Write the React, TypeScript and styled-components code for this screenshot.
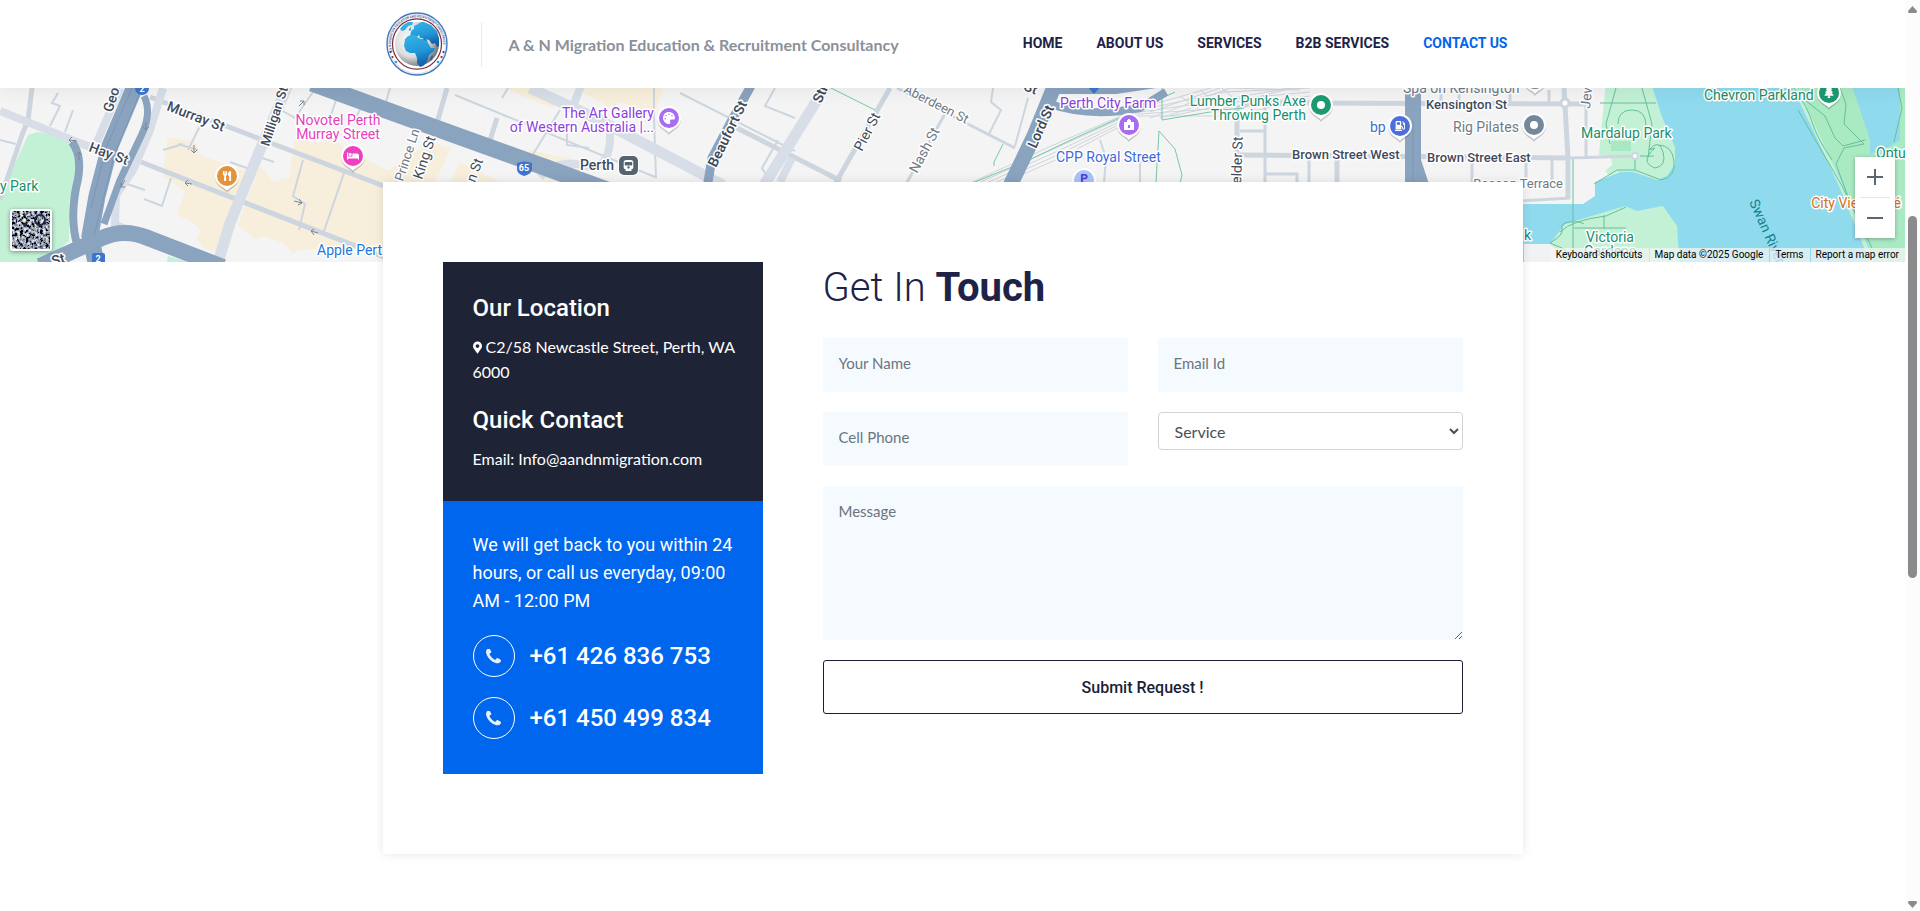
import React from "react";
import styled, { createGlobalStyle } from "styled-components";
import { FaBed, FaUtensils, FaMapMarkerAlt, FaPalette, FaGasPump, FaTree, FaTrain } from "react-icons/fa";

const heading = 'Roboto, "Liberation Sans", sans-serif';
const body = 'Lato, "Open Sans", sans-serif';
const navy = "#1e2247";
const blue = "#0066ee";

const GlobalStyle = createGlobalStyle`
  * { box-sizing: border-box; }
  body { margin: 0; background: #fff; font-family: ${body}; font-size: 15px; line-height: 25px; }
  h2, h3, p { margin: 0; }
  a { color: inherit; text-decoration: none; }
`;

const Viewport = styled.div`
  display: flex;
  height: 100vh;
  overflow: hidden;
`;

const Page = styled.div`
  flex: 1;
  min-width: 0;
  overflow: hidden;
`;

const Container = styled.div`
  width: 100%;
  max-width: 1140px;
  margin: 0 auto;
`;

const Header = styled.header`
  position: relative;
  z-index: 2;
  background: #fff;
  box-shadow: 0 0 20px rgba(0, 0, 0, 0.08);
`;

const HeaderRow = styled(Container)`
  display: flex;
  align-items: center;
  height: 88px;
  padding: 0 15px 0 3px;
`;

const LogoLink = styled.a`
  display: flex;
`;

const Tagline = styled.p`
  display: flex;
  align-items: center;
  height: 45px;
  margin-left: 33px;
  padding-left: 27px;
  border-left: 1px solid #e9eaec;
  color: #8b9099;
  font-size: 16px;
  font-weight: 700;
`;

const Nav = styled.nav`
  display: flex;
  gap: 34px;
  margin-left: auto;
  padding-bottom: 2px;
`;

const NavLink = styled.a<{ $active?: boolean }>`
  color: ${(p) => (p.$active ? blue : navy)};
  font: 700 14px/24px ${heading};
  text-transform: uppercase;
`;

const MapSection = styled.section`
  position: relative;
  height: 174px;
  background: #f4f4f4;
`;

const MapDrawing = styled.svg`
  display: block;
  width: 100%;
  height: 100%;
`;

const MapText = styled.text<{ $weight?: number; $size?: number; $plain?: boolean }>`
  font-family: ${heading};
  font-size: ${(p) => p.$size ?? 14}px;
  font-weight: ${(p) => p.$weight ?? 400};
  paint-order: stroke;
  stroke: ${(p) => (p.$plain ? "none" : "#fff")};
  stroke-width: 3px;
  stroke-linejoin: round;
`;

const SatelliteButton = styled.button`
  position: absolute;
  left: 10px;
  bottom: 11px;
  width: 42px;
  height: 42px;
  padding: 0;
  overflow: hidden;
  border: 2px solid #fff;
  border-radius: 3px;
  background: #889;
  box-shadow: 0 1px 4px rgba(0, 0, 0, 0.4);
`;

const ZoomControl = styled.div`
  position: absolute;
  right: 10px;
  bottom: 24px;
  width: 40px;
  padding: 0 5px;
  background: #fff;
  box-shadow: 0 1px 4px rgba(0, 0, 0, 0.3);
`;

const ZoomButton = styled.button`
  display: flex;
  align-items: center;
  justify-content: center;
  width: 100%;
  height: 40px;
  padding: 0;
  border: 0;
  background: none;
  & + & {
    height: 41px;
    border-top: 1px solid #e6e6e6;
  }
`;

const Attribution = styled.div`
  position: absolute;
  right: 0;
  bottom: 0;
  display: flex;
  height: 14px;
  font: 400 10px/14px ${heading};
  color: #000;
`;

const AttributionLink = styled.a`
  padding: 0 6px 0 5px;
  background: rgba(245, 245, 245, 0.72);
  & + & {
    margin-left: 1px;
  }
`;

const Card = styled(Container)`
  position: relative;
  z-index: 1;
  display: flex;
  gap: 60px;
  margin-top: -80px;
  padding: 80px 60px;
  background: #fff;
  box-shadow: 0 0 10px rgba(0, 0, 0, 0.1);
`;

const Aside = styled.aside`
  flex: 0 0 320px;
  color: #fff;
`;

const LocationPanel = styled.div`
  display: flex;
  flex-direction: column;
  gap: 20px;
  padding: 30px 20px 30px 30px;
  background: #1f2336;
`;

const PanelBlock = styled.div`
  display: flex;
  flex-direction: column;
  gap: 10px;
`;

const PanelTitle = styled.h3`
  font: 500 24px/32px ${heading};
`;

const PanelText = styled.p`
  font-size: 16px;
  svg {
    width: 9px;
    height: 13px;
    vertical-align: -1px;
  }
`;

const CallPanel = styled.div`
  display: flex;
  flex-direction: column;
  gap: 20px;
  padding: 30px 20px 35px 30px;
  background: ${blue};
`;

const CallText = styled.p`
  font: 400 18px/28px ${heading};
`;

const PhoneLink = styled.a`
  display: flex;
  align-items: center;
  gap: 15px;
  font: 500 24px/42px ${heading};
`;

const PhoneBadge = styled.span`
  display: flex;
  align-items: center;
  justify-content: center;
  width: 42px;
  height: 42px;
  border: 1px solid #fff;
  border-radius: 50%;
`;

const FormColumn = styled.div`
  flex: 1;
  min-width: 0;
`;

const FormTitle = styled.h2`
  margin-bottom: 24px;
  color: ${navy};
  font: 300 40px/52px ${heading};
  strong {
    font-weight: 700;
  }
`;

const Form = styled.form`
  display: grid;
  grid-template-columns: 1fr 1fr;
  gap: 20px 30px;
  align-items: start;
`;

const Input = styled.input`
  width: 100%;
  height: 54px;
  padding: 0 16px 4px;
  border: 0;
  border-radius: 0;
  background: #f5faff;
  color: #495057;
  font: 400 15px/24px ${body};
  &::placeholder {
    color: #6c757d;
    opacity: 1;
  }
`;

const Textarea = styled(Input)`
  display: block;
  grid-column: 1 / -1;
  height: 154px;
  padding: 13px 16px;
  resize: vertical;
`;

const Select = styled.select`
  width: 100%;
  height: 38px;
  padding: 6px 12px;
  border: 1px solid #ced4da;
  border-radius: 4px;
  background: #fff;
  color: #495057;
  font: 400 16px/24px ${body};
`;

const Submit = styled.button`
  grid-column: 1 / -1;
  height: 54px;
  padding: 2px 6px 0;
  border: 1px solid #1b1f36;
  border-radius: 3px;
  background: #fff;
  color: #1b1f36;
  font: 500 16px/24px ${heading};
`;

const ScrollRail = styled.div`
  display: flex;
  flex: 0 0 15px;
  flex-direction: column;
  align-items: center;
  padding: 6px 0 3px;
  background: #fcfcfc;
`;

const RailArrow = styled.svg`
  flex: none;
  width: 9px;
  height: 7px;
  fill: #8b8b8d;
`;

const RailSpace = styled.div<{ $grow: number }>`
  flex: ${(p) => p.$grow} 0 0;
`;

const RailThumb = styled(RailSpace)`
  width: 9px;
  border-radius: 5px;
  background: #8b8b8d;
`;

function Logo() {
  return (
    <svg width="62" height="64" viewBox="0 0 62 64" role="img" aria-label="A & N Migration">
      <defs>
        <radialGradient id="sphere" cx="0.38" cy="0.4" r="0.65">
          <stop offset="0" stopColor="#fff" />
          <stop offset="0.6" stopColor="#dcdde0" />
          <stop offset="1" stopColor="#6f7176" />
        </radialGradient>
        <linearGradient id="land" x1="0" y1="0" x2="0.3" y2="1">
          <stop offset="0" stopColor="#37b6e8" />
          <stop offset="0.6" stopColor="#2398d8" />
          <stop offset="1" stopColor="#1361ac" />
        </linearGradient>
        <path id="ring" d="M6.5 40 A26 26 0 1 1 55.500 40" />
      </defs>
      <ellipse cx="31" cy="32" rx="30" ry="31" fill="#fff" stroke="#4577bd" strokeWidth="1.400" />
      <ellipse cx="31" cy="32" rx="28.500" ry="29.500" fill="none" stroke="#b9cbe4" strokeWidth="0.600" />
      <ellipse cx="31" cy="32" rx="24.500" ry="25.200" fill="#fff" stroke="#7d2b3c" strokeWidth="1.200" />
      <circle cx="31" cy="32" r="22" fill="url(#sphere)" />
      <text fontFamily="Roboto, sans-serif" fontSize="3" fontWeight="700" fill="#3c5b92">
        <textPath href="#ring">A &amp; N MIGRATION EDUCATION AND RECRUITMENT CONSULTANCY</textPath>
      </text>
      <g fill="url(#land)">
        <path d="M19 27l3-3 4-1 4-1 1 3 4 2 5-1 2 5 3 5 4 0-1 3-5 4-1 4-2 4-3 3-3 1-3-4 0-5-2-5-5 0-4-2-2-5z" />
        <path d="M25 20l1-2 2-1 0-3 4-2 3-2 3 0 7 3 6 6 2 7 0 8-2 1-2-4-3 1-3-4-3-1 1 2-3-1-1-2-3 0-1-3-2 2-2-2-3 0-2 1z" />
        <path d="M14 17l3-4 5-3 5 0-1 3-4 1-3 4-3 1zM23 17l2-2 0 3-2 1zM44 47l2-4 1 1-2 5z" />
      </g>
      <g fill="#3e2f5c">
        <circle cx="4.500" cy="40" r="1.100" />
        <circle cx="6.500" cy="45" r="1.100" fill="#8f2632" />
        <circle cx="10" cy="50" r="1.300" fill="#2aa7e0" />
        <circle cx="57.500" cy="40" r="1.100" />
        <circle cx="55.500" cy="45" r="1.100" fill="#8f2632" />
        <circle cx="52" cy="50" r="1.300" fill="#2aa7e0" />
      </g>
    </svg>
  );
}

type LabelProps = {
  x: number;
  y: number;
  color: string;
  children: string;
  rotate?: number;
  weight?: number;
  size?: number;
  plain?: boolean;
  anchor?: "start" | "middle" | "end";
};

function Label({ x, y, color, children, rotate = 0, weight, size, plain, anchor = "start" }: LabelProps) {
  return (
    <MapText
      x={x}
      y={y}
      fill={color}
      textAnchor={anchor}
      transform={rotate ? `rotate(${rotate} ${x} ${y})` : undefined}
      $weight={weight}
      $size={size}
      $plain={plain}
    >
      {children}
    </MapText>
  );
}

function Pin({ x, y, color, children }: { x: number; y: number; color: string; children?: React.ReactNode }) {
  return (
    <g transform={`translate(${x} ${y})`}>
      <path d="M0 16c-2-4-12-6-12-16a12 12 0 0 1 24 0c0 10-10 12-12 16z" fill="#0003" transform="translate(0 1)" />
      <path d="M0 15c-2-4-12-5-12-15a12 12 0 0 1 24 0c0 10-10 11-12 15z" fill="#fff" />
      <circle r="10" fill={color} />
      {children ?? <circle r="4" fill="#fff" />}
    </g>
  );
}

const road = "#cdd6df";
const wide = "#d8dee7";
const freeway = "#8aa3bf";
const dark = "#3f4b5c";
const grey = "#6f7b89";
const purple = "#8d41dc";
const green = "#17906b";

function PerthMap() {
  return (
    <MapDrawing viewBox="0 88 1905 174" preserveAspectRatio="xMidYMid slice" role="img" aria-label="Map of Perth">
      <rect y="80" width="1905" height="190" fill="#f4f4f4" />

      {/* city blocks */}
      <g fill="#f7eedb">
        <path d="M168 137l27 5 5 13 46 16 4 9-23 73-13-2-10-3-7-9 4-7-8-10-16-7 8-23-22-16z" />
        <path d="M295 140l25 3 13-4 16 12 40 20v92l-33-17-56 4-7 3-10-10-20-7-7 4-18-15 22-60 13 17 16-4z" />
        <path d="M505 88h32l23 16-8 4zM583 88h80l-8 26-35-12-8 6-29-15z" />
        <path d="M431 142l20 6-16 34h-52v-8z" />
        <path d="M528 150l60 12-10 10 30 10h-60zM460 162l40 20h-50z" />
      </g>

      {/* parks */}
      <path d="M28 135l9-3 30 5 10 20v15l-8 31v38l-24 21H0v-65z" fill="#c3f1d5" />
      <path d="M168 256l20 6h-21z" fill="#c3f1d5" />

      {/* river and shores */}
      <path d="M1645 80h260v190h-385v-66h63l12-8v-14l30-12 30-5z" fill="#90daee" />
      <path d="M1606 80h44l12 37 13 30v17l-8 12-10 4-24-8h-16l-7 4-5-5 7-6-1-8-12-2z" fill="#c3f1d5" />
      <path d="M1611 141h20v10h-20z" fill="#a9e8c3" />
      <path d="M1524 244h26l15-20 60-18 12 5 26-5 14 20 3 44h-156z" fill="#c3f1d5" />
      <path d="M1524 244h26l12 10-4 14h-34z" fill="#f0f2f3" />
      <path d="M1794 80h56l20 60v14l14-4 16-10v-60h10v190h-32l-34-86-28-52z" fill="#a9eac3" />
      <path d="M1794 86l24 50 24 52 30 74" stroke="#c3f1d5" strokeWidth="4" fill="none" />

      {/* park paths */}
      <g fill="none" stroke="#68bf9c" strokeWidth="1">
        <path d="M1616 88l-10 36 4 20M1642 88l10 36-4 34M1600 103h56M1618 124q0-14 14-14t14 16M1640 156h14M1655 148q-16 14 0 20 12-2 8-16t-14-2zM1635 156v14M1658 145q14 0 16 16t-13 19l-26-10h-18l-23 14" />
        <path d="M1573 158v100M1560 232q12-12 46-16l20-9M1574 228h52M1604 215v14M1550 243q14-8 12-14t8-7 14 2M1550 243l14 6 8 12" />
        <path d="M1794 88q14 20 18 34t20 38M1805 100l20 16 10 22 8 8 22-6M1840 88l6 16-2 20 20 20-20 4-8 16 16 44M1898 88l4 20-8 34M1798 110l44 76 30 62" />
      </g>

      {/* minor streets */}
      <g fill="none" stroke={road} strokeWidth="2">
        <path d="M58 93l-6 10 8 3-10 20M73 110l-8 22M0 140l16 4M163 150l20-6M202 122l-14 28M178 144l20 6M171 178l-9 28-18-7M127 184l18 6M230 162l22 8M262 158l12 4M303 160l-10 36 12 8-6 26M336 100l-6 18M366 100l-12 20M345 170l-22 64M390 88l-4 14M281 110l14 8 18-26M508 88l-6 10" />
        <path d="M455 95l200 82M560 110l-28 46M567 125v20l22 3M654 88v30l2 60M680 93l115 58M770 182l-8-14 16-28M775 88l-10 18 30 12M993 88l-2 14 10 8-12 24M1028 98l-13 48M1100 140l6 18-2 24M1140 182v-20h14" />
        <path d="M1240 131h26M1265 104v78M1265 174h32v8M1309 160v22M1472 163v19M1526 158v24M1552 158v22M1441 88v16M1459 88v16M1510 88v16M1549 90v14" strokeWidth="3" />
      </g>
      <g fill="none" stroke={road} strokeWidth="5">
        <path d="M32 88l-4 32-6 15-22 65M141 162l248 97M150 97l239 91M447 88l-10 35M497 118l-10 32M735 127l106 54M890 88l-55 96M1237 108v78M1237 108l15-5 340 1M1240 155l330 3M1564 88l4 70v40M1337 158v26" />
        <path d="M947 110l-42 76M897 88l118 60M1586 88v70M1568 158l70-2M1520 201l50-3" strokeWidth="3" />
      </g>
      <circle cx="1565" cy="103" r="4" fill="#fff" stroke={road} strokeWidth="3" />
      <circle cx="1635" cy="156" r="3" fill="#fff" stroke={road} strokeWidth="2" />
      <g fill="none" stroke={wide} strokeWidth="8">
        <path d="M0 111l77 31 60 22" />
        <path d="M120 88l-23 54M163 88l-13 42-17 40-17 25-1 30 12 4M610 133q1 34-20 34-32-10-50 10M583 80l-12 32M780 182l12-24" />
        <path d="M290 80l-30 70-30 73-14 46M530 88l63 29 130 68M827 84l-66 106" strokeWidth="11" />
      </g>

      {/* railway */}
      <g fill="none" stroke="#cfd5dd" strokeWidth="1">
        {[0, 4, 8, 12, 16].map((d) => (
          <path key={d} d={`M${955 + d * 2} 190L1060 ${142 + d}L1140 ${108 + d / 2}L1225 ${84 + d * 2}L1310 ${84 + d}`} />
        ))}
        <path d="M1150 118l80-30 70 2M1160 118l50-16 80-14M1150 112l70-24M1170 116l60-12 70-18M1180 96l20 14M1200 90l20 16M1222 88l16 14" />
      </g>
      <path d="M965 186l64-26 46-22 40-18 60-28M1162 88v32l60-10 22-2M1159 131l-3 51M1159 131l16 18 7 26-2 8M1003 144l-9 18v4M831 88l44 22" fill="none" stroke="#74c9a5" strokeWidth="1" />

      {/* freeways */}
      <g fill="none" stroke={freeway}>
        <path d="M136 84l-26 62-13 50-7 40 7 30" strokeWidth="17" />
        <path d="M144 96q8 16-2 38l-22 46-16 44" strokeWidth="7" />
        <path d="M72 142q12 16 4 46-6 32 1 56" strokeWidth="8" />
        <path d="M40 266l62-28q22-10 46 0l75 29" strokeWidth="16" />
        <path d="M312 83l71 26 164 59 60 22" strokeWidth="17" />
        <path d="M752 84l-20 36-20 38-5 30" strokeWidth="9" />
        <path d="M1056 82l-22 54-26 54" strokeWidth="15" />
        <path d="M1046 90h70l40-6M1050 104q40 14 90 4l26-16" strokeWidth="8" />
        <path d="M1413 92v94" strokeWidth="16" />
      </g>
      <path d="M1421 160l8 24h-14z" fill={freeway} />
      <g fill="none" stroke="#7b97b7" strokeWidth="1">
        <path d="M132 88l-26 60-15 60M140 92l-26 64-20 80M1413 120v62" />
      </g>

      {/* one-way arrows */}
      <g fill="none" stroke="#7d8791" strokeWidth="1">
        <path d="M77 141l-8-1m3-3l-3 3 3 3M79 160v-8m-3 3l3-3 3 3M146 122v8m-3-3l3 3 3-3M125 180l-4 7m0-4v4h4M194 145v8m-3-3l3 3 3-3M192 184l-7-1m3-3l-3 3 3 3M299 106l5-5m-4 0h4v4M294 201l8 2m-3-4l3 4-4 2M318 233l-7-2m3-2l-3 2 3 4" />
      </g>

      {/* route shields */}
      <g fill="#3d74cf">
        <circle cx="142" cy="88" r="7" />
        <rect x="92" y="253" width="13" height="14" rx="2" />
        <path d="M517 163q7-3 15 0v6q0 5-8 7-7-2-7-7z" />
        <path d="M1087 86h14l-7 8z" />
      </g>
      <g fontFamily="Roboto, sans-serif" fontSize="9" fontWeight="700" fill="#fff" textAnchor="middle">
        <text x="142" y="92">2</text>
        <text x="98" y="262">2</text>
        <text x="524" y="171">65</text>
      </g>

      {/* street names */}
      <Label x={112} y={113} rotate={-72} color={dark} weight={500}>Geor</Label>
      <Label x={166} y={110} rotate={21} color={dark} weight={500}>Murray St</Label>
      <Label x={88} y={151} rotate={20} color={dark} weight={500}>Hay St</Label>
      <Label x={269} y={147} rotate={-72} color={dark} weight={500} size={13}>Milligan St</Label>
      <Label x={53} y={266} rotate={-15} color={dark} weight={600}>St</Label>
      <Label x={403} y={182} rotate={-72} color={grey} size={13}>Prince Ln</Label>
      <Label x={422} y={180} rotate={-72} color={dark}>King St</Label>
      <Label x={475} y={183} rotate={-70} color={dark}>n St</Label>
      <Label x={716} y={168} rotate={-64} color={dark} weight={600}>Beaufort St</Label>
      <Label x={821} y={104} rotate={-66} color={dark} weight={600}>Stir</Label>
      <Label x={862} y={152} rotate={-63} color={dark}>Pier St</Label>
      <Label x={903} y={92} rotate={27} color={grey} size={13}>Aberdeen St</Label>
      <Label x={917} y={174} rotate={-62} color={grey}>Nash St</Label>
      <Label x={1023} y={90} rotate={20} color={dark} weight={500}>St</Label>
      <Label x={1036} y={149} rotate={-66} color={dark} weight={600}>Lord St</Label>
      <Label x={1241} y={184} rotate={-88} color={dark}>elder St</Label>
      <Label x={1590} y={109} rotate={-84} color={grey}>Jew</Label>
      <Label x={1292} y={159} color={dark} weight={500} size={13}>Brown Street West</Label>
      <Label x={1427} y={162} color={dark} weight={500} size={13}>Brown Street East</Label>
      <Label x={1426} y={109} color={dark} weight={500} size={13}>Kensington St</Label>
      <Label x={1563} y={188} color={grey} size={13} anchor="end">Beacon Terrace</Label>

      {/* places */}
      <Label x={338} y={125} color="#e93fbd" anchor="middle">Novotel Perth</Label>
      <Label x={338} y={139} color="#e93fbd" anchor="middle">Murray Street</Label>
      <Label x={0} y={191} color={green}>y Park</Label>
      <Label x={317} y={255} color="#1f78dc">Apple Perth</Label>
      <Label x={654} y={118} color={purple} anchor="end">The Art Gallery</Label>
      <Label x={654} y={132} color={purple} anchor="end">of Western Australia |...</Label>
      <Label x={580} y={170} color={dark} weight={500}>Perth</Label>
      <Label x={1060} y={108} color={purple}>Perth City Farm</Label>
      <Label x={1056} y={162} color="#3f69de">CPP Royal Street</Label>
      <Label x={1306} y={106} color={green} anchor="end">Lumber Punks Axe</Label>
      <Label x={1306} y={120} color={green} anchor="end">Throwing Perth</Label>
      <Label x={1370} y={132} color="#3b6fd0">bp</Label>
      <Label x={1403} y={93} color={grey}>Spa on Kensington</Label>
      <Label x={1453} y={132} color={grey}>Rig Pilates</Label>
      <Label x={1581} y={138} color={green}>Mardalup Park</Label>
      <Label x={1704} y={100} color={green}>Chevron Parkland</Label>
      <Label x={1876} y={158} color={green}>Optu</Label>
      <Label x={1901} y={208} color="#d6701e" anchor="end">City View Café</Label>
      <Label x={1524} y={240} color="#14838f">k</Label>
      <Label x={1610} y={242} color={green} anchor="middle">Victoria</Label>
      <Label x={1610} y={256} color={green} anchor="middle">Gardens</Label>
      <Label x={1749} y={202} rotate={66} color="#14838f" plain>Swan River</Label>

      {/* pins */}
      <Pin x={227} y={176} color="#e2933b"><FaUtensils x={-5} y={-5} size={10} color="#fff" /></Pin>
      <Pin x={353} y={156} color="#ee41c2"><FaBed x={-6} y={-6} size={12} color="#fff" /></Pin>
      <Pin x={669} y={118} color="#a96cf0"><FaPalette x={-6} y={-6} size={12} color="#fff" /></Pin>
      <Pin x={1129} y={125} color="#a96cf0">
        <path d="M-5 5v-8h3v-2h1v-1h2v1h1v2h3v8zM-1 3h2v-3h-2z" fill="#fff" fillRule="evenodd" />
      </Pin>
      <Pin x={1321} y={105} color="#1c9a70" />
      <Pin x={1400} y={126} color="#4c6fdc"><FaGasPump x={-5} y={-5} size={10} color="#fff" /></Pin>
      <Pin x={1534} y={125} color="#74889c" />
      <Pin x={1535} y={79} color="#74889c" />
      <Pin x={1829} y={93} color="#1c9a70"><FaTree x={-6} y={-7} size={12} color="#fff" /></Pin>
      <circle cx="1084" cy="180" r="12" fill="#fff" />
      <circle cx="1084" cy="180" r="10" fill="#a9c4f8" />
      <text x="1084" y="183" fontFamily="Roboto, sans-serif" fontSize="12" fontWeight="700" fill="#5b36d6" textAnchor="middle">P</text>
      <rect x="618" y="155" width="21" height="21" rx="6" fill="#fff" />
      <rect x="619" y="156" width="19" height="19" rx="5" fill="#56646f" />
      <FaTrain x={623} y={160} size={11} color="#fff" />
    </MapDrawing>
  );
}

function PhoneIcon() {
  return (
    <svg width="15" height="15" viewBox="192 192 1408 1408" fill="#fff" opacity="0.9" aria-hidden="true">
      <path d="M1600 1240q0 27-10 70.500t-21 68.500q-21 50-122 106-94 51-186 51-27 0-53-3.500t-57.500-12.500-47-14.500-55.500-20.500-49-18q-98-35-175-83-127-79-264-216t-216-264q-48-77-83-175-3-9-18-49t-20.500-55.500-14.500-47-12.500-57.500-3.500-53q0-92 51-186 56-101 106-122 25-11 68.500-21t70.500-10q14 0 21 3 18 6 53 76 11 19 30 54t35 63.500 31 53.500q3 4 17.500 25t21.500 35.500 7 28.500q0 20-28.500 50t-62 55-62 53-28.500 46q0 9 5 22.500t8.500 20.500 14 24 11.500 19q76 137 174 235t235 174q2 1 19 11.500t24 14 20.500 8.500 22.500 5q18 0 46-28.500t53-62 55-62 50-28.500q14 0 28.500 7t35.500 21.500 25 17.500q25 15 53.500 31t63.500 35 54 30q70 35 76 53 3 7 3 21z" />
    </svg>
  );
}

const navItems = ["Home", "About Us", "Services", "B2B Services", "Contact Us"];
const phones = ["+61 426 836 753", "+61 450 499 834"];

export default function App() {
  return (
    <Viewport>
      <GlobalStyle />
      <Page>
        <Header>
          <HeaderRow>
            <LogoLink href="#home"><Logo /></LogoLink>
            <Tagline>A &amp; N Migration Education &amp; Recruitment Consultancy</Tagline>
            <Nav>
              {navItems.map((item) => (
                <NavLink key={item} href="#" $active={item === "Contact Us"}>{item}</NavLink>
              ))}
            </Nav>
          </HeaderRow>
        </Header>

        <MapSection>
          <PerthMap />
          <SatelliteButton aria-label="Show satellite imagery">
            <svg width="38" height="38" aria-hidden="true">
              <filter id="aerial" x="0" y="0" width="100%" height="100%">
                <feTurbulence type="fractalNoise" baseFrequency="0.35" numOctaves="3" seed="4" />
                <feColorMatrix values="2.2 0 0 0 -0.82  2.2 0 0 0 -0.8  2.2 0 0 0 -0.74  0 0 0 0 1" />
              </filter>
              <rect width="38" height="38" filter="url(#aerial)" />
              <circle cx="28" cy="9" r="5" fill="none" stroke="#23283a" strokeWidth="2" />
              <circle cx="13" cy="14" r="2" fill="#23283a" />
            </svg>
          </SatelliteButton>
          <ZoomControl>
            <ZoomButton aria-label="Zoom in">
              <svg width="18" height="18" aria-hidden="true"><path d="M1 9h16M9 1v16" stroke="#5a6672" strokeWidth="2" /></svg>
            </ZoomButton>
            <ZoomButton aria-label="Zoom out">
              <svg width="18" height="18" aria-hidden="true"><path d="M1 9h16" stroke="#5a6672" strokeWidth="2" /></svg>
            </ZoomButton>
          </ZoomControl>
          <Attribution>
            <AttributionLink href="#shortcuts">Keyboard shortcuts</AttributionLink>
            <AttributionLink href="#data">Map data ©2025 Google</AttributionLink>
            <AttributionLink href="#terms">Terms</AttributionLink>
            <AttributionLink href="#report">Report a map error</AttributionLink>
          </Attribution>
        </MapSection>

        <Card as="main">
          <Aside>
            <LocationPanel>
              <PanelBlock>
                <PanelTitle>Our Location</PanelTitle>
                <PanelText><FaMapMarkerAlt aria-hidden /> C2/58 Newcastle Street, Perth, WA 6000</PanelText>
              </PanelBlock>
              <PanelBlock>
                <PanelTitle>Quick Contact</PanelTitle>
                <PanelText>Email: Info@aandnmigration.com</PanelText>
              </PanelBlock>
            </LocationPanel>
            <CallPanel>
              <CallText>We will get back to you within 24 hours, or call us everyday, 09:00 AM - 12:00 PM</CallText>
              {phones.map((phone) => (
                <PhoneLink key={phone} href={`tel:${phone.replace(/ /g, "")}`}>
                  <PhoneBadge><PhoneIcon /></PhoneBadge>
                  {phone}
                </PhoneLink>
              ))}
            </CallPanel>
          </Aside>
          <FormColumn>
            <FormTitle>Get In <strong>Touch</strong></FormTitle>
            <Form onSubmit={(e) => e.preventDefault()}>
              <Input aria-label="Your Name" placeholder="Your Name" />
              <Input aria-label="Email Id" type="email" placeholder="Email Id" />
              <Input aria-label="Cell Phone" type="tel" placeholder="Cell Phone" />
              <Select aria-label="Service" defaultValue="Service">
                <option>Service</option>
              </Select>
              <Textarea as="textarea" aria-label="Message" placeholder="Message" />
              <Submit type="submit">Submit Request !</Submit>
            </Form>
          </FormColumn>
        </Card>
      </Page>
      <ScrollRail aria-hidden="true">
        <RailArrow viewBox="0 0 9 7"><path d="M4.500 0L9 5q0 2-1 2H1Q0 7 0 5z" /></RailArrow>
        <RailSpace $grow={203} />
        <RailThumb $grow={362} />
        <RailSpace $grow={323} />
        <RailArrow viewBox="0 0 9 7"><path d="M4.500 7L9 2q0-2-1-2H1Q0 0 0 2z" /></RailArrow>
      </ScrollRail>
    </Viewport>
  );
}
